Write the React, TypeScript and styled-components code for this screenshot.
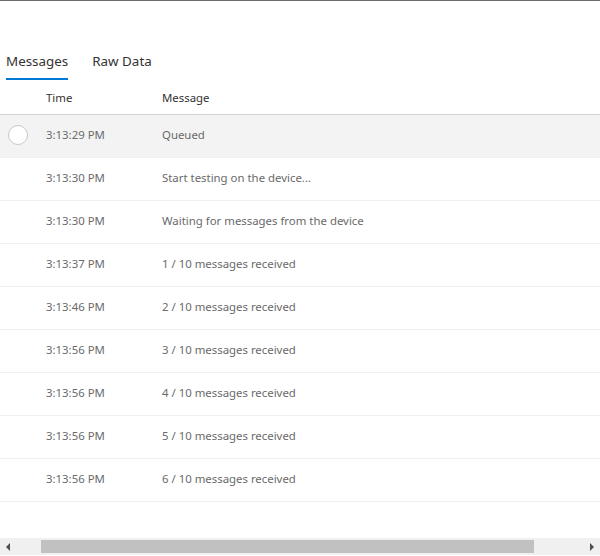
import React from "react";
import styled, { createGlobalStyle } from "styled-components";

const Global = createGlobalStyle`
  html, body { margin: 0; padding: 0; background: #fff; }
  body { font-family: "Segoe UI", "Noto Sans", sans-serif; }
`;

const Frame = styled.div`
  width: 600px;
  height: 556px;
  box-sizing: border-box;
  border-top: 1px solid #6b6b6b;
  display: flex;
  flex-direction: column;
  overflow: hidden;
`;

const TabBar = styled.div`
  display: flex;
  gap: 24px;
  padding: 43px 0 0 6px;
  height: 81px;
  box-sizing: border-box;
`;

const Tab = styled.div<{ $active?: boolean }>`
  font-size: 13.4px;
  color: #333;
  height: 36px;
  line-height: 34px;
  box-sizing: border-box;
  border-bottom: 2px solid ${(p) => (p.$active ? "#0078d4" : "transparent")};
`;

const Table = styled.div`
  flex: 1;
  display: flex;
  flex-direction: column;
`;

const HeaderRow = styled.div`
  display: grid;
  grid-template-columns: 46px 116px 1fr;
  height: 33px;
  align-items: center;
  font-size: 11.4px;
  color: #333;
  border-bottom: 1px solid #d0d0d0;
  box-sizing: border-box;
  padding-bottom: 1px;
`;

const Row = styled.div<{ $selected?: boolean }>`
  display: grid;
  grid-template-columns: 46px 116px 1fr;
  height: 43px;
  align-items: center;
  font-size: 11.4px;
  color: #6a6a6a;
  background: ${(p) => (p.$selected ? "#f3f3f3" : "#fff")};
  border-bottom: 1px solid #f0f0f0;
  box-sizing: border-box;
  padding-bottom: 3px;
`;

const CheckCell = styled.div`
  display: flex;
  align-items: center;
  padding-left: 8px;
`;

const Circle = styled.div`
  width: 18px;
  height: 18px;
  border-radius: 50%;
  border: 1px solid #c8c8c8;
  background: #fff;
`;

const Spacer = styled.div`
  flex: 1;
`;

const HScroll = styled.div`
  height: 17px;
  background: #f0f0f0;
  display: flex;
  align-items: center;
  margin-bottom: 1px;
`;

const Arrow = styled.div`
  width: 17px;
  height: 17px;
  display: flex;
  align-items: center;
  justify-content: center;
`;

const Track = styled.div`
  flex: 1;
  display: flex;
  align-items: center;
  padding: 0 49px 0 24px;
`;

const Thumb = styled.div`
  flex: 1;
  height: 13px;
  background: #c1c1c1;
`;

const rows = [
  ["3:13:29 PM", "Queued"],
  ["3:13:30 PM", "Start testing on the device..."],
  ["3:13:30 PM", "Waiting for messages from the device"],
  ["3:13:37 PM", "1 / 10 messages received"],
  ["3:13:46 PM", "2 / 10 messages received"],
  ["3:13:56 PM", "3 / 10 messages received"],
  ["3:13:56 PM", "4 / 10 messages received"],
  ["3:13:56 PM", "5 / 10 messages received"],
  ["3:13:56 PM", "6 / 10 messages received"],
];

export default function App() {
  return (
    <>
      <Global />
      <Frame>
        <TabBar>
          <Tab $active>Messages</Tab>
          <Tab>Raw Data</Tab>
        </TabBar>
        <Table>
          <HeaderRow>
            <div />
            <div>Time</div>
            <div>Message</div>
          </HeaderRow>
          {rows.map(([t, m], i) => (
            <Row key={i} $selected={i === 0}>
              <CheckCell>{i === 0 && <Circle />}</CheckCell>
              <div>{t}</div>
              <div>{m}</div>
            </Row>
          ))}
          <Spacer />
        </Table>
        <HScroll>
          <Arrow>
            <svg width="5" height="8" viewBox="0 0 5 8">
              <path d="M4 0 L0 4 L4 8 Z" fill="#505050" />
            </svg>
          </Arrow>
          <Track>
            <Thumb />
          </Track>
          <Arrow>
            <svg width="5" height="8" viewBox="0 0 5 8">
              <path d="M1 0 L5 4 L1 8 Z" fill="#505050" />
            </svg>
          </Arrow>
        </HScroll>
      </Frame>
    </>
  );
}
